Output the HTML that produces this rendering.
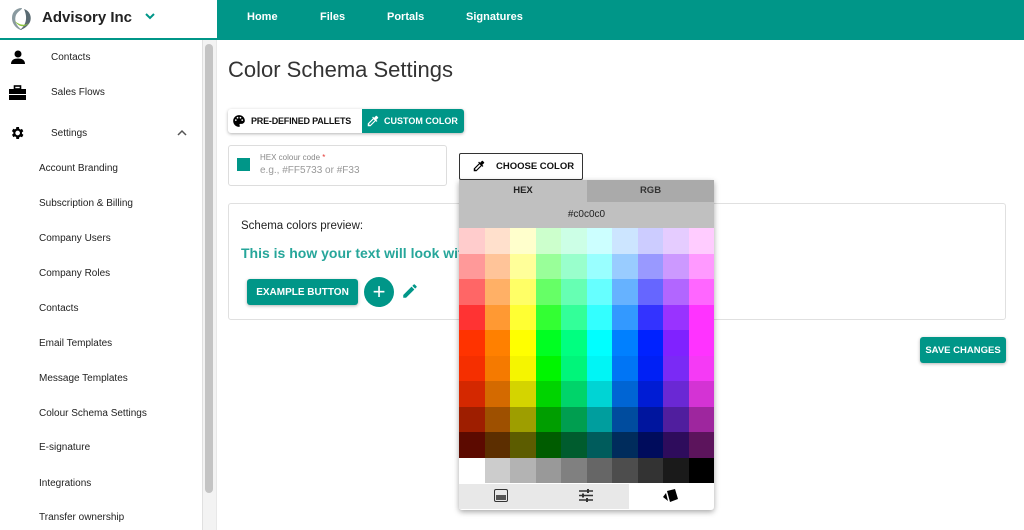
<!DOCTYPE html><html><head><meta charset="utf-8"><style>
*{box-sizing:border-box;margin:0;padding:0}
body{width:1024px;height:530px;overflow:hidden;background:#fff;font-family:"Liberation Sans",Arial,sans-serif;position:relative;color:#222}
.a{position:absolute}
.nav{left:217px;top:0;width:807px;height:40px;background:#009688}
.nav span{position:absolute;top:11px;color:#fff;font-size:11px;font-weight:bold}
.side{font-size:10px;color:#222}
.btn{background:#009688;color:#fff;font-size:10px;font-weight:bold;border-radius:3px;display:flex;align-items:center;justify-content:center;box-shadow:0 1px 3px rgba(0,0,0,.3)}
.grid{left:459px;top:228px;width:255px;display:grid;grid-template-columns:repeat(10,25.5px);grid-auto-rows:25.5px}
</style></head><body>
<div class="a" style="left:0;top:0;width:217px;height:40px;border-bottom:2px solid #009688"></div>
<svg class="a" style="left:10px;top:6px" width="24" height="26" viewBox="0 0 24 26"><path d="M12 2 C6 2 2 6 2 12 C2 19 8 24 12 24 C6 20 4 14 6 9 C8 5 12 4 12 2Z" fill="#8a9aa0"/><path d="M14 3 C20 5 22 11 20 16 C18 20 14 23 10 24 C16 19 18 12 14 3Z" fill="#5a6b72"/><path d="M5 15 C8 21 15 22 19 17 C15 20 9 19 5 15Z" fill="#8dc63f"/></svg>
<div class="a" style="left:42px;top:9px;font-size:15px;font-weight:bold;color:#222">Advisory Inc</div>
<svg class="a" style="left:144px;top:11px" width="12" height="10"><path d="M2 3l4 4 4-4" stroke="#009688" stroke-width="2" fill="none"/></svg>
<div class="a nav"><span style="left:30px">Home</span><span style="left:103px">Files</span><span style="left:170px">Portals</span><span style="left:249px">Signatures</span></div>
<div class="a" style="left:202px;top:40px;width:1px;height:490px;background:#e0e0e0"></div>
<div class="a" style="left:203px;top:40px;width:13px;height:490px;background:#f3f3f3"></div>
<div class="a" style="left:205px;top:44px;width:8px;height:449px;background:#c4c4c4;border-radius:4px"></div>
<div class="a" style="left:216px;top:40px;width:1px;height:490px;background:#e8e8e8"></div>
<svg class="a" style="left:10px;top:49px" width="16" height="16" viewBox="0 0 16 16"><circle cx="8" cy="5" r="3.5"/><path d="M1 15c0-4 3-5.5 7-5.5s7 1.5 7 5.5z"/></svg>
<div class="a side" style="left:51px;top:52px">Contacts</div>
<svg class="a" style="left:9px;top:85px" width="17" height="15" viewBox="0 0 17 15"><rect x="5.5" y="1" width="6" height="3" fill="none" stroke="#000" stroke-width="1.6"/><rect x="0" y="4" width="17" height="5"/><rect x="0" y="10" width="17" height="5"/></svg>
<div class="a side" style="left:51px;top:87px">Sales Flows</div>
<svg class="a" style="left:9px;top:125px" width="16" height="16" viewBox="0 0 24 24"><path d="M19.4 13a7.5 7.5 0 000-2l2.1-1.6-2-3.5-2.5 1a7.5 7.5 0 00-1.7-1L15 3h-4l-.4 2.6a7.5 7.5 0 00-1.7 1l-2.5-1-2 3.5L6.6 11a7.5 7.5 0 000 2l-2.1 1.6 2 3.5 2.5-1a7.5 7.5 0 001.7 1L11 21h4l.4-2.6a7.5 7.5 0 001.7-1l2.5 1 2-3.5zM13 15.5a3.5 3.5 0 110-7 3.5 3.5 0 010 7z"/></svg>
<div class="a side" style="left:51px;top:128px">Settings</div>
<svg class="a" style="left:176px;top:129px" width="12" height="8"><path d="M2 6l4-4 4 4" stroke="#555" stroke-width="1.5" fill="none"/></svg>
<div class="a side" style="left:39px;top:163px">Account Branding</div>
<div class="a side" style="left:39px;top:198px">Subscription &amp; Billing</div>
<div class="a side" style="left:39px;top:233px">Company Users</div>
<div class="a side" style="left:39px;top:268px">Company Roles</div>
<div class="a side" style="left:39px;top:303px">Contacts</div>
<div class="a side" style="left:39px;top:338px">Email Templates</div>
<div class="a side" style="left:39px;top:373px">Message Templates</div>
<div class="a side" style="left:39px;top:408px">Colour Schema Settings</div>
<div class="a side" style="left:39px;top:442px">E-signature</div>
<div class="a side" style="left:39px;top:478px">Integrations</div>
<div class="a side" style="left:39px;top:512px">Transfer ownership</div>

<div class="a" style="left:228px;top:57px;font-size:22px;color:#333">Color Schema Settings</div>
<div class="a" style="left:228px;top:109px;width:236px;height:24px;border-radius:3px;box-shadow:0 1px 3px rgba(0,0,0,.3);background:#fff"></div>
<svg class="a" style="left:232px;top:114px" width="14" height="14" viewBox="0 0 24 24"><path d="M12 2C6.5 2 2 6.5 2 12s4.5 10 10 10c1 0 1.5-.7 1.5-1.5 0-.4-.2-.8-.4-1-.3-.3-.4-.6-.4-1 0-.8.7-1.5 1.5-1.5H16c3 0 6-2.5 6-5.5C22 6 17.5 2 12 2zM6.5 12a1.5 1.5 0 110-3 1.5 1.5 0 010 3zm3-4a1.5 1.5 0 110-3 1.5 1.5 0 010 3zm5 0a1.5 1.5 0 110-3 1.5 1.5 0 010 3zm3 4a1.5 1.5 0 110-3 1.5 1.5 0 010 3z"/></svg>
<div class="a" style="left:251px;top:116px;font-size:9px;font-weight:bold;color:#111;letter-spacing:-0.2px;white-space:nowrap">PRE-DEFINED PALLETS</div>
<div class="a" style="left:362px;top:109px;width:102px;height:24px;background:#009688;border-radius:0 3px 3px 0"></div>
<svg class="a" style="left:366px;top:114px" width="14" height="14" viewBox="0 0 24 24"><path d="M20.7 5.6l-2.3-2.3a1 1 0 00-1.4 0l-3.1 3.1-1.9-1.9-1.4 1.4 1.4 1.4L3 16.3V21h4.7l9-9 1.4 1.4 1.4-1.4-1.9-1.9 3.1-3.1a1 1 0 000-1.4zM6.9 19L5 17.1l8.1-8.1 1.9 1.9z" fill="#fff"/></svg>
<div class="a" style="left:384px;top:116px;font-size:9px;font-weight:bold;color:#fff;white-space:nowrap">CUSTOM COLOR</div>

<div class="a" style="left:228px;top:145px;width:219px;height:41px;border:1px solid #ddd;border-radius:3px"></div>
<div class="a" style="left:237px;top:158px;width:13px;height:13px;background:#009688"></div>
<div class="a" style="left:260px;top:153px;font-size:8px;color:#888">HEX colour code <span style="color:#e53935">*</span></div>
<div class="a" style="left:260px;top:165px;font-size:10px;color:#999">e.g., #FF5733 or #F33</div>

<div class="a" style="left:459px;top:153px;width:124px;height:27px;border:1px solid #333;border-radius:2px;background:#fff"></div>
<svg class="a" style="left:472px;top:159px" width="14" height="14" viewBox="0 0 24 24"><path d="M20.7 5.6l-2.3-2.3a1 1 0 00-1.4 0l-3.1 3.1-1.9-1.9-1.4 1.4 1.4 1.4L3 16.3V21h4.7l9-9 1.4 1.4 1.4-1.4-1.9-1.9 3.1-3.1a1 1 0 000-1.4zM6.9 19L5 17.1l8.1-8.1 1.9 1.9z"/></svg>
<div class="a" style="left:496px;top:161px;font-size:9.5px;font-weight:bold;color:#111">CHOOSE COLOR</div>

<div class="a" style="left:228px;top:203px;width:778px;height:117px;border:1px solid #e0e0e0;border-radius:3px"></div>
<div class="a" style="left:241px;top:220px;font-size:11.5px;color:#222">Schema colors preview:</div>
<div class="a" style="left:241px;top:245px;font-size:14px;font-weight:bold;color:#26a69a;white-space:nowrap;width:220px;overflow:hidden">This is how your text will look with</div>
<div class="a btn" style="left:247px;top:279px;width:111px;height:26px">EXAMPLE BUTTON</div>
<div class="a" style="left:364px;top:277px;width:30px;height:30px;border-radius:50%;background:#009688;color:#fff;font-size:22px;line-height:29px;text-align:center">+</div>
<svg class="a" style="left:401px;top:282px" width="18" height="18" viewBox="0 0 24 24"><path d="M3 17.25V21h3.75L17.8 9.94l-3.75-3.75zM20.7 7.04a1 1 0 000-1.41l-2.34-2.34a1 1 0 00-1.41 0l-1.83 1.83 3.75 3.75z" fill="#009688"/></svg>
<div class="a btn" style="left:920px;top:337px;width:86px;height:26px;font-size:9.5px">SAVE CHANGES</div>

<div class="a" style="left:459px;top:180px;width:255px;height:330px;box-shadow:0 2px 6px rgba(0,0,0,.35);border-radius:0 0 3px 3px;background:#fff"></div>
<div class="a" style="left:459px;top:180px;width:128px;height:22px;background:#c0c0c0;font-size:9.5px;font-weight:bold;text-align:center;line-height:22px">HEX</div>
<div class="a" style="left:587px;top:180px;width:127px;height:22px;background:#aaa;font-size:9.5px;font-weight:bold;text-align:center;line-height:22px;color:#333">RGB</div>
<div class="a" style="left:459px;top:202px;width:255px;height:26px;background:#c0c0c0;font-size:10px;text-align:center;line-height:26px">#c0c0c0</div>
<div class="a grid">
<i style="background:#ffcccc"></i><i style="background:#ffe0cc"></i><i style="background:#ffffcc"></i><i style="background:#ccffcc"></i><i style="background:#ccffe6"></i><i style="background:#ccffff"></i><i style="background:#cce5ff"></i><i style="background:#ccccff"></i><i style="background:#e5ccff"></i><i style="background:#ffccff"></i>
<i style="background:#ff9999"></i><i style="background:#ffc499"></i><i style="background:#ffff99"></i><i style="background:#99ff99"></i><i style="background:#99ffcc"></i><i style="background:#99ffff"></i><i style="background:#99ccff"></i><i style="background:#9999ff"></i><i style="background:#cc99ff"></i><i style="background:#ff99ff"></i>
<i style="background:#ff6666"></i><i style="background:#ffb066"></i><i style="background:#ffff66"></i><i style="background:#66ff66"></i><i style="background:#66ffb3"></i><i style="background:#66ffff"></i><i style="background:#66b2ff"></i><i style="background:#6666ff"></i><i style="background:#b266ff"></i><i style="background:#ff66ff"></i>
<i style="background:#ff3333"></i><i style="background:#ff9933"></i><i style="background:#ffff33"></i><i style="background:#33ff33"></i><i style="background:#33ff99"></i><i style="background:#33ffff"></i><i style="background:#3399ff"></i><i style="background:#3333ff"></i><i style="background:#9933ff"></i><i style="background:#ff33ff"></i>
<i style="background:#ff3300"></i><i style="background:#ff8000"></i><i style="background:#ffff00"></i><i style="background:#00ff22"></i><i style="background:#00ff80"></i><i style="background:#00ffff"></i><i style="background:#0080ff"></i><i style="background:#0022ff"></i><i style="background:#8022ff"></i><i style="background:#ff33ff"></i>
<i style="background:#f52f00"></i><i style="background:#f57a00"></i><i style="background:#f5f500"></i><i style="background:#00f500"></i><i style="background:#00f57a"></i><i style="background:#00f5f5"></i><i style="background:#0075f5"></i><i style="background:#0020f5"></i><i style="background:#7a2af5"></i><i style="background:#f53af5"></i>
<i style="background:#d42800"></i><i style="background:#d46a00"></i><i style="background:#d4d400"></i><i style="background:#00d400"></i><i style="background:#00d46a"></i><i style="background:#00d4d4"></i><i style="background:#0065d4"></i><i style="background:#001cd4"></i><i style="background:#6a28d4"></i><i style="background:#d433d4"></i>
<i style="background:#9e1e00"></i><i style="background:#9e5000"></i><i style="background:#9e9e00"></i><i style="background:#009e00"></i><i style="background:#009e50"></i><i style="background:#009e9e"></i><i style="background:#004c9e"></i><i style="background:#00159e"></i><i style="background:#501e9e"></i><i style="background:#9e269e"></i>
<i style="background:#5c0a00"></i><i style="background:#5c2e00"></i><i style="background:#5c5c00"></i><i style="background:#005c00"></i><i style="background:#005c2e"></i><i style="background:#005c5c"></i><i style="background:#002c5c"></i><i style="background:#000c5c"></i><i style="background:#2e0c5c"></i><i style="background:#5c145c"></i>
<i style="background:#fff"></i><i style="background:#ccc"></i><i style="background:#b3b3b3"></i><i style="background:#999"></i><i style="background:#808080"></i><i style="background:#666"></i><i style="background:#4d4d4d"></i><i style="background:#333"></i><i style="background:#1a1a1a"></i><i style="background:#000"></i>
</div>
<div class="a" style="left:459px;top:484px;width:170px;height:25px;background:#e8e8e8"></div>
<svg class="a" style="left:494px;top:489px" width="14" height="13" viewBox="0 0 14 13"><rect x="0.5" y="0.5" width="13" height="12" rx="1.5" fill="none" stroke="#333"/><rect x="2" y="6" width="10" height="5" fill="#555"/></svg>
<svg class="a" style="left:579px;top:489px" width="14" height="13" viewBox="0 0 14 13" stroke="#333" stroke-width="1.5"><path d="M0 2h14M0 6.5h14M0 11h14"/><path d="M9 0v4M4 4.5v4M8 9v4" stroke-width="2"/></svg>
<svg class="a" style="left:662px;top:488px" width="16" height="16" viewBox="0 0 16 16"><path d="M5 3l8-2 3 10-8 3z"/><path d="M1 9l3-4 2 8z"/></svg>
</body></html>
